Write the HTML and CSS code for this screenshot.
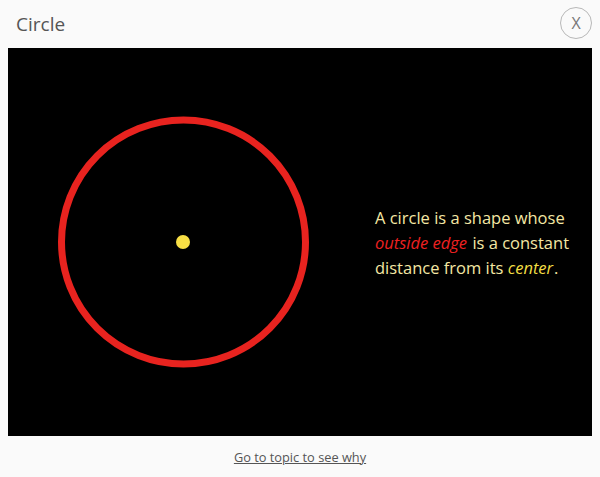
FILE: index.html
```html
<!DOCTYPE html>
<html>
<head>
<meta charset="utf-8">
<link rel="stylesheet" href="styles.css">
</head>
<body>
<div class="dialog">
  <header class="header">
    <h1 class="title">Circle</h1>
    <button class="close">X</button>
  </header>
  <main class="stage">
    <svg class="figure" width="367" height="388" viewBox="0 0 367 388">
      <circle cx="175.5" cy="194" r="122" fill="none" stroke="#e8231f" stroke-width="7"/>
      <circle cx="175" cy="194" r="7" fill="#f8df45"/>
    </svg>
    <p class="desc">A circle is a shape whose <em class="red">outside edge</em> is a constant distance from its <em class="yellow">center</em>.</p>
  </main>
  <footer class="footer">
    <a class="link" href="#">Go to topic to see why</a>
  </footer>
</div>
</body>
</html>
```
FILE: styles.css
```css
html, body {
  margin: 0;
  padding: 0;
  background: #fafafa;
  font-family: "Open Sans", "Noto Sans", sans-serif;
}
.dialog {
  width: 600px;
  height: 477px;
  display: flex;
  flex-direction: column;
}
.header {
  height: 48px;
  display: flex;
  align-items: center;
  justify-content: space-between;
  padding: 0 8px 0 16px;
  box-sizing: border-box;
}
.title {
  margin: 0;
  font-size: 19px;
  font-weight: 400;
  color: #555;
  line-height: 1;
}
.close {
  width: 32px;
  height: 32px;
  border-radius: 50%;
  border: 1px solid #b8b8b8;
  background: #fafafa;
  color: #777;
  font-family: "Open Sans", sans-serif;
  font-size: 16px;
  padding: 0;
  display: flex;
  align-items: center;
  justify-content: center;
  margin-top: -2px;
}
.stage {
  height: 388px;
  margin: 0 8px;
  background: #000;
  display: flex;
  align-items: center;
}
.figure {
  display: block;
  flex: none;
}
.desc {
  margin: 0;
  font-size: 16.5px;
  line-height: 25px;
  color: #f4e7a4;
  width: 205px;
}
.red {
  color: #ee2020;
  padding-right: 1px;
}
.yellow {
  color: #f2df44;
  padding-right: 1px;
}
.footer {
  flex: 1;
  display: flex;
  align-items: center;
  justify-content: center;
}
.link {
  font-size: 12.8px;
  color: #555;
  text-decoration: underline;
}
```
